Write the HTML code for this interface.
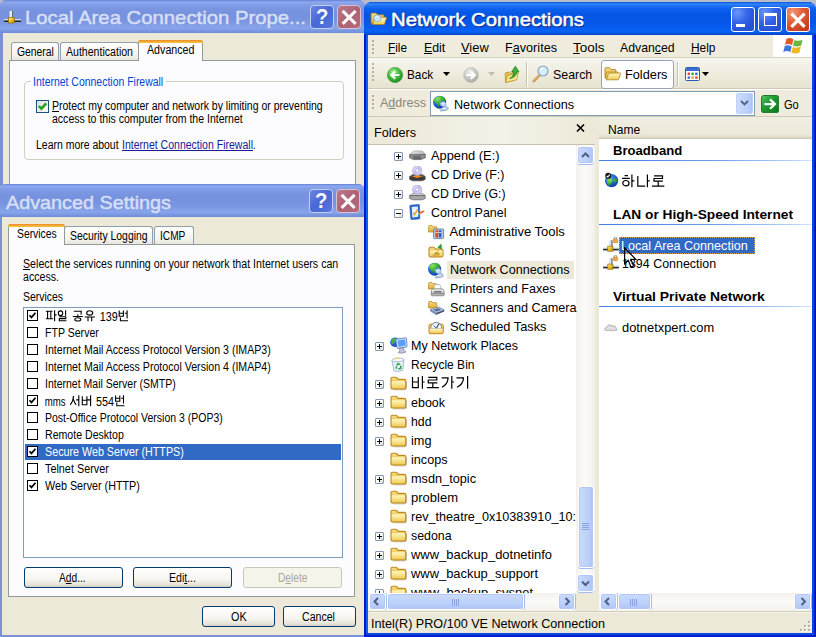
<!DOCTYPE html>
<html><head><meta charset="utf-8"><title>Network Connections</title><style>
html,body{margin:0;padding:0}
body{width:816px;height:637px;overflow:hidden;position:relative;background:#b8bcc6;font-family:"Liberation Sans",sans-serif}
#pg{position:absolute;left:0;top:0;width:816px;height:637px;overflow:hidden}
#pg div,#pg svg,#pg span{position:absolute}
.t{white-space:nowrap;line-height:1;transform-origin:0 0}
.t u{text-decoration:underline}
</style></head><body><div id="pg">
<svg width="0" height="0" style="left:0;top:0"><defs><linearGradient id="fo" x1="0" y1="0" x2="0" y2="1"><stop offset="0" stop-color="#fff8c0"/><stop offset="1" stop-color="#f0cc58"/></linearGradient><linearGradient id="fb" x1="0" y1="0" x2="0" y2="1"><stop offset="0" stop-color="#f8dc80"/><stop offset="1" stop-color="#e0ac38"/></linearGradient><radialGradient id="gl" cx=".38" cy=".32" r=".8"><stop offset="0" stop-color="#58a0f0"/><stop offset=".6" stop-color="#1c58c8"/><stop offset="1" stop-color="#0c3490"/></radialGradient><radialGradient id="gb" cx=".38" cy=".3" r=".8"><stop offset="0" stop-color="#9cec84"/><stop offset=".55" stop-color="#3cb838"/><stop offset="1" stop-color="#188420"/></radialGradient><radialGradient id="gf" cx=".38" cy=".3" r=".8"><stop offset="0" stop-color="#ececea"/><stop offset=".65" stop-color="#c0c0ba"/><stop offset="1" stop-color="#a0a09a"/></radialGradient><linearGradient id="ggo" x1="0" y1="0" x2="1" y2="1"><stop offset="0" stop-color="#5cc464"/><stop offset=".4" stop-color="#1e9c32"/><stop offset="1" stop-color="#0c7420"/></linearGradient><linearGradient id="dt" x1="0" y1="0" x2="1" y2="1"><stop offset="0" stop-color="#f4f4f4"/><stop offset="1" stop-color="#a8a8a8"/></linearGradient><linearGradient id="cdg" x1="0" y1="0" x2="1" y2="1"><stop offset="0" stop-color="#f0ecff"/><stop offset=".5" stop-color="#c4bcf0"/><stop offset="1" stop-color="#e4e0fc"/></linearGradient><linearGradient id="bar" x1="0" y1="0" x2="0" y2="1"><stop offset="0" stop-color="#e4eefa"/><stop offset=".45" stop-color="#a8b8c8"/><stop offset=".55" stop-color="#303030"/><stop offset="1" stop-color="#202020"/></linearGradient><linearGradient id="yb" x1="0" y1="0" x2="1" y2="1"><stop offset="0" stop-color="#fff0a0"/><stop offset=".5" stop-color="#f0c020"/><stop offset="1" stop-color="#b88800"/></linearGradient><radialGradient id="gr" cx=".3" cy=".25" r=".9"><stop offset="0" stop-color="#8ce060"/><stop offset=".5" stop-color="#38b030"/><stop offset="1" stop-color="#148018"/></radialGradient></defs></svg>
<div style="left:0px;top:0px;width:365px;height:186px;background:#7b92d6;border-radius:6px 7px 0 0"></div>
<div style="left:0px;top:0px;width:365px;height:33px;background:linear-gradient(to bottom,#6480d8 0,#8ea9ee 2px,#86a1ea 4px,#7c98e2 7px,#7691de 13px,#7792df 19px,#7f9be5 24px,#88a5eb 28px,#7f9be4 30px,#7390de 32px,#6f8bda 33px);border-radius:6px 7px 0 0"></div>
<div style="left:3px;top:33px;width:362px;height:153px;background:#ECE9D8"></div>
<div style="left:310.4px;top:5.2px;width:24px;height:24.3px;box-sizing:border-box;border:1px solid #c3cff0;border-radius:4px;background:linear-gradient(135deg,#6a86e2 0,#4a69d6 45%,#4c6cd8 70%,#5a7ce4 100%)"></div>
<div style="left:337.4px;top:5.2px;width:24px;height:24.3px;box-sizing:border-box;border:1px solid #d9c3cf;border-radius:4px;background:linear-gradient(135deg,#bd7a8c 0,#ad6275 50%,#b56b7c 100%)"></div>
<svg style="left:337.4px;top:5.2px" width="24" height="24" viewBox="0 0 24 24"><path d="M5.6 5.8 L18.6 18.8 M18.6 5.8 L5.6 18.8" stroke="#fbf8fa" stroke-width="3.1" fill="none"/></svg>
<svg style="left:4px;top:11px" width="17" height="13" viewBox="0 0 17 13"><rect x="0" y="8" width="17" height="3" fill="url(#bar)"/><rect x="5.6" y="0" width="3.2" height="8.4" fill="#e8ecf4"/><rect x="8" y="0" width="1" height="8.4" fill="#60687c"/><rect x="4.6" y="6.4" width="5.6" height="5.6" fill="url(#yb)" stroke="#8c6c08" stroke-width=".7"/></svg>
<div style="left:9px;top:60px;width:347px;height:130px;box-sizing:border-box;border:1px solid #919b9c;background:#fcfcfe"></div>
<div style="left:11px;top:42px;width:48px;height:18px;box-sizing:border-box;border:1px solid #91a1ac;border-bottom:none;border-radius:3px 3px 0 0;background:linear-gradient(to bottom,#fff 0,#f4f3ee 70%,#e8e6dc 100%)"></div>
<div style="left:60px;top:42px;width:78.5px;height:18px;box-sizing:border-box;border:1px solid #91a1ac;border-bottom:none;border-radius:3px 3px 0 0;background:linear-gradient(to bottom,#fff 0,#f4f3ee 70%,#e8e6dc 100%)"></div>
<div style="left:138px;top:40px;width:65px;height:21px;box-sizing:border-box;border:1px solid #919b9c;border-bottom:none;border-radius:3px 3px 0 0;background:#fcfcfe"></div>
<div style="left:138px;top:40px;width:65px;height:3px;border-radius:3px 3px 0 0;background:linear-gradient(to bottom,#e68b2c 0,#ffc73c 100%)"></div>
<div style="left:24px;top:81px;width:320px;height:79px;box-sizing:border-box;border:1px solid #d0d0bf;border-radius:4px"></div>
<div style="left:31px;top:76px;width:135px;height:12px;background:#fcfcfe"></div>
<div style="left:36px;top:100px;width:13px;height:13px;box-sizing:border-box;border:1px solid #1c5180;background:linear-gradient(135deg,#dcdcd7 0,#fff 100%)"></div>
<svg style="left:36px;top:100px" width="13" height="13" viewBox="0 0 13 13"><path d="M2.8 6 L5.4 8.7 L10.2 3.4" stroke="#21a121" stroke-width="2.5" fill="none"/></svg>
<div style="left:0px;top:184px;width:365px;height:453px;background:#7b92d6;border-radius:6px 7px 0 0"></div>
<div style="left:0px;top:184px;width:365px;height:33px;background:linear-gradient(to bottom,#6480d8 0,#8ea9ee 2px,#86a1ea 4px,#7c98e2 7px,#7691de 13px,#7792df 19px,#7f9be5 24px,#88a5eb 28px,#7f9be4 30px,#7390de 32px,#6f8bda 33px);border-radius:6px 7px 0 0"></div>
<div style="left:2px;top:217px;width:363px;height:418px;background:#ECE9D8"></div>
<div style="left:309.4px;top:189.2px;width:24px;height:24.3px;box-sizing:border-box;border:1px solid #c3cff0;border-radius:4px;background:linear-gradient(135deg,#6a86e2 0,#4a69d6 45%,#4c6cd8 70%,#5a7ce4 100%)"></div>
<div style="left:336.3px;top:189.2px;width:24px;height:24.3px;box-sizing:border-box;border:1px solid #d9c3cf;border-radius:4px;background:linear-gradient(135deg,#bd7a8c 0,#ad6275 50%,#b56b7c 100%)"></div>
<svg style="left:336.3px;top:189.2px" width="24" height="24" viewBox="0 0 24 24"><path d="M5.6 5.8 L18.6 18.8 M18.6 5.8 L5.6 18.8" stroke="#fbf8fa" stroke-width="3.1" fill="none"/></svg>
<div style="left:8px;top:244px;width:347px;height:353px;box-sizing:border-box;border:1px solid #919b9c;background:#fcfcfe"></div>
<div style="left:64px;top:226px;width:88.5px;height:18px;box-sizing:border-box;border:1px solid #91a1ac;border-bottom:none;border-radius:3px 3px 0 0;background:linear-gradient(to bottom,#fff 0,#f4f3ee 70%,#e8e6dc 100%)"></div>
<div style="left:153.5px;top:226px;width:40.5px;height:18px;box-sizing:border-box;border:1px solid #91a1ac;border-bottom:none;border-radius:3px 3px 0 0;background:linear-gradient(to bottom,#fff 0,#f4f3ee 70%,#e8e6dc 100%)"></div>
<div style="left:8px;top:224px;width:57px;height:21px;box-sizing:border-box;border:1px solid #919b9c;border-bottom:none;border-radius:3px 3px 0 0;background:#fcfcfe"></div>
<div style="left:8px;top:224px;width:57px;height:3px;border-radius:3px 3px 0 0;background:linear-gradient(to bottom,#e68b2c 0,#ffc73c 100%)"></div>
<div style="left:23px;top:307px;width:320px;height:251px;box-sizing:border-box;border:1px solid #7f9db9;background:#fff"></div>
<div style="left:27px;top:310px;width:11px;height:11px;box-sizing:border-box;border:1px solid #000;background:#fff"></div>
<svg style="left:27px;top:310px" width="11" height="11" viewBox="0 0 11 11"><path d="M2.5 5.2 L4.5 7.4 L8.5 2.8" stroke="#000" stroke-width="1.7" fill="none"/></svg>
<svg style="left:45px;top:304.5px" width="100" height="22" viewBox="0 0 100 22"><g transform="translate(0.9,5.2)" stroke="#000" stroke-width="1.1" fill="none" stroke-linecap="butt"><path d="M0 1H6.6 M1.7 1V8.6 M4.9 1V8.6 M0 8.6H7.2 M8.7 0V11 M8.7 4.7H10.6"/></g><g transform="translate(12.8,5.2)" stroke="#000" stroke-width="1.1" fill="none" stroke-linecap="butt"><ellipse cx="2.7" cy="3" rx="2.2" ry="2.3"/><path d="M7.8 0V5.6 M1.5 6.5H8 V8.4H1.5 V10.5H8.6"/></g><g transform="translate(27.8,5.2)" stroke="#000" stroke-width="1.1" fill="none" stroke-linecap="butt"><path d="M1 1H8.5 L8.2 4.4 M5 4V6.3 M0 6.3H10"/><ellipse cx="5" cy="9.2" rx="3" ry="1.6"/></g><g transform="translate(39.7,5.2)" stroke="#000" stroke-width="1.1" fill="none" stroke-linecap="butt"><ellipse cx="5" cy="2.7" rx="3" ry="2.2"/><path d="M0 6.8H10.3 M3.3 6.8V11 M7 6.8V11"/></g><g transform="translate(73.4,5.2)" stroke="#000" stroke-width="1.1" fill="none" stroke-linecap="butt"><path d="M0.8 0.3V6 H5 V0.3 M0.8 3H5 M8.7 0V8.2 M6.4 3H8.7 M2 7.4V10.5 H9.6"/></g><text x="54.7" y="15.5" font-family="Liberation Sans, sans-serif" font-size="12" textLength="18.1" lengthAdjust="spacingAndGlyphs" fill="#000" stroke="none">139</text></svg>
<div style="left:27px;top:327px;width:11px;height:11px;box-sizing:border-box;border:1px solid #000;background:#fff"></div>
<div style="left:27px;top:344px;width:11px;height:11px;box-sizing:border-box;border:1px solid #000;background:#fff"></div>
<div style="left:27px;top:361px;width:11px;height:11px;box-sizing:border-box;border:1px solid #000;background:#fff"></div>
<div style="left:27px;top:378px;width:11px;height:11px;box-sizing:border-box;border:1px solid #000;background:#fff"></div>
<div style="left:27px;top:395px;width:11px;height:11px;box-sizing:border-box;border:1px solid #000;background:#fff"></div>
<svg style="left:27px;top:395px" width="11" height="11" viewBox="0 0 11 11"><path d="M2.5 5.2 L4.5 7.4 L8.5 2.8" stroke="#000" stroke-width="1.7" fill="none"/></svg>
<svg style="left:45px;top:389.5px" width="100" height="22" viewBox="0 0 100 22"><text x="-0.3" y="15.5" font-family="Liberation Sans, sans-serif" font-size="12" textLength="20.8" lengthAdjust="spacingAndGlyphs" fill="#000" stroke="none">mms</text><g transform="translate(25,5.2)" stroke="#000" stroke-width="1.1" fill="none" stroke-linecap="butt"><path d="M3.5 0.8 C3.4 4.5 2 7.5 0.2 9.6 M3.4 4 C4 6.5 5 8.5 6.3 9.6 M8.8 0V11 M6.2 4.7H8.8"/></g><g transform="translate(36.7,5.2)" stroke="#000" stroke-width="1.1" fill="none" stroke-linecap="butt"><path d="M0.6 1V9.5 H5.2 V1 M0.6 5H5.2 M8.9 0V11 M5.2 4.7H8.9"/></g><g transform="translate(69.8,5.2)" stroke="#000" stroke-width="1.1" fill="none" stroke-linecap="butt"><path d="M0.8 0.3V6 H5 V0.3 M0.8 3H5 M8.7 0V8.2 M6.4 3H8.7 M2 7.4V10.5 H9.6"/></g><text x="51.1" y="15.5" font-family="Liberation Sans, sans-serif" font-size="12" textLength="18" lengthAdjust="spacingAndGlyphs" fill="#000" stroke="none">554</text></svg>
<div style="left:27px;top:412px;width:11px;height:11px;box-sizing:border-box;border:1px solid #000;background:#fff"></div>
<div style="left:27px;top:429px;width:11px;height:11px;box-sizing:border-box;border:1px solid #000;background:#fff"></div>
<div style="left:25px;top:444px;width:316px;height:16px;background:#316ac5"></div>
<div style="left:27px;top:446px;width:11px;height:11px;box-sizing:border-box;border:1px solid #000;background:#fff"></div>
<svg style="left:27px;top:446px" width="11" height="11" viewBox="0 0 11 11"><path d="M2.5 5.2 L4.5 7.4 L8.5 2.8" stroke="#000" stroke-width="1.7" fill="none"/></svg>
<div style="left:27px;top:463px;width:11px;height:11px;box-sizing:border-box;border:1px solid #000;background:#fff"></div>
<div style="left:27px;top:480px;width:11px;height:11px;box-sizing:border-box;border:1px solid #000;background:#fff"></div>
<svg style="left:27px;top:480px" width="11" height="11" viewBox="0 0 11 11"><path d="M2.5 5.2 L4.5 7.4 L8.5 2.8" stroke="#000" stroke-width="1.7" fill="none"/></svg>
<div style="left:24px;top:567px;width:99px;height:21px;border:1px solid #003c74;border-radius:3px;box-sizing:border-box;background:linear-gradient(to bottom,#fff 0,#f6f5f0 60%,#e6e3d8 88%,#d6d0c5 100%)"></div>
<div style="left:133px;top:567px;width:99px;height:21px;border:1px solid #003c74;border-radius:3px;box-sizing:border-box;background:linear-gradient(to bottom,#fff 0,#f6f5f0 60%,#e6e3d8 88%,#d6d0c5 100%)"></div>
<div style="left:243px;top:567px;width:99px;height:21px;border:1px solid #c9c7ba;border-radius:3px;background:#f5f4ea;box-sizing:border-box"></div>
<div style="left:202px;top:606px;width:73px;height:21px;border:1px solid #003c74;border-radius:3px;box-sizing:border-box;background:linear-gradient(to bottom,#fff 0,#f6f5f0 60%,#e6e3d8 88%,#d6d0c5 100%)"></div>
<div style="left:283px;top:606px;width:73px;height:21px;border:1px solid #003c74;border-radius:3px;box-sizing:border-box;background:linear-gradient(to bottom,#fff 0,#f6f5f0 60%,#e6e3d8 88%,#d6d0c5 100%)"></div>
<div style="left:364px;top:1.5px;width:452px;height:636px;background:#0a3cdc;border-radius:8px 8px 0 0"></div>
<div style="left:364px;top:1.5px;width:452px;height:33.5px;background:linear-gradient(to bottom,#0a50d8 0,#3088fa 2px,#2070f6 4px,#0c5fee 7px,#0656e4 12px,#0556e6 20px,#065cee 26px,#0764f6 29px,#0558e2 31px,#0444c4 33px);border-radius:8px 8px 0 0"></div>
<div style="left:364px;top:35px;width:2px;height:600px;background:#0418d2"></div>
<div style="left:366px;top:35px;width:1px;height:598px;background:#1468ee"></div>
<div style="left:367px;top:35px;width:1px;height:598px;background:#0c5ce4"></div>
<div style="left:812px;top:35px;width:2px;height:598px;background:#0a48e6"></div>
<div style="left:814px;top:35px;width:1px;height:600px;background:#0420cc"></div>
<div style="left:815px;top:35px;width:1px;height:602px;background:#001494"></div>
<div style="left:366px;top:633px;width:448px;height:2px;background:#0a48e6"></div>
<div style="left:364px;top:635px;width:452px;height:2px;background:#0420c4"></div>
<div style="left:368px;top:35px;width:444px;height:598px;background:#ECE9D8"></div>
<div style="left:731.3px;top:7.2px;width:24.2px;height:24.4px;box-sizing:border-box;border:1px solid #fff;border-radius:3px;background:radial-gradient(circle at 25% 20%,#6a98fa 0,#3565ea 40%,#2450d2 80%,#2a58dc 100%)"></div>
<div style="left:758.3px;top:7.2px;width:24.2px;height:24.4px;box-sizing:border-box;border:1px solid #fff;border-radius:3px;background:radial-gradient(circle at 25% 20%,#6a98fa 0,#3565ea 40%,#2450d2 80%,#2a58dc 100%)"></div>
<div style="left:785.5px;top:7.2px;width:24.2px;height:24.4px;box-sizing:border-box;border:1px solid #fff;border-radius:3px;background:radial-gradient(circle at 25% 20%,#f29a78 0,#e0603c 40%,#c43a1a 85%,#cc4422 100%)"></div>
<div style="left:736px;top:24px;width:9px;height:3px;background:#fff"></div>
<div style="left:764px;top:13px;width:13px;height:13px;box-sizing:border-box;border:1px solid #fff;border-top:3px solid #fff"></div>
<svg style="left:785.5px;top:7.5px" width="24" height="24" viewBox="0 0 24 24"><path d="M5.4 5.6 L18.6 18.8 M18.6 5.6 L5.4 18.8" stroke="#fff" stroke-width="3.2" fill="none"/></svg>
<svg style="left:370px;top:11px" width="17" height="15" viewBox="0 0 17 15"><path d="M1 3 q0-1 1-1 h3.6 q.7 0 1.1.7 l.7 1.1 H13 q1 0 1 1 V12.6 H1z" fill="url(#fb)" stroke="#a87410" stroke-width=".8"/><path d="M2.6 13.6 L4.8 6.8 q.2-.6.9-.6 H16 q.8 0 .5.8 L14.6 13 q-.2.6-.9.6z" fill="url(#fo)" stroke="#b08018" stroke-width=".8"/><circle cx="7.4" cy="7.4" r="3.5" fill="#c8e6f6" stroke="#88b4d4" stroke-width=".9"/><path d="M5.6 6.6 A2.2 2.2 0 0 1 7.6 5.2" stroke="#fff" stroke-width=".9" fill="none"/></svg>
<div style="left:368px;top:35px;width:444px;height:23px;background:#efecdd"></div>
<div style="left:368px;top:57px;width:444px;height:1px;background:#d8d2bd"></div>
<div style="left:773px;top:35px;width:39px;height:22px;background:#fff"></div>
<svg style="left:783px;top:37px" width="21" height="18" viewBox="0 0 21 18"><path d="M3.4 1.8 C6.2 0.4 8.4 0.9 10.4 2.4 L9 8.2 C7 6.8 5 6.5 2 7.8z" fill="#e8582c"/><path d="M11.4 3 C14 4.3 16.6 4.1 19.6 2.7 L18.2 8.5 C15.2 9.8 12.8 9.7 10 8.7z" fill="#6cb83c"/><path d="M1.7 9 C4.7 7.6 6.7 8 8.7 9.4 L7.3 15.2 C5.3 13.8 3.3 13.6 .3 14.9z" fill="#3c78d8"/><path d="M9.8 9.9 C12.6 11 15 10.9 17.9 9.6 L16.5 15.4 C13.6 16.7 11.2 16.7 8.4 15.7z" fill="#f0b820"/></svg>
<div style="left:372px;top:40px;width:2px;height:2px;background:#b5b19f"></div>
<div style="left:372px;top:44px;width:2px;height:2px;background:#b5b19f"></div>
<div style="left:372px;top:48px;width:2px;height:2px;background:#b5b19f"></div>
<div style="left:372px;top:52px;width:2px;height:2px;background:#b5b19f"></div>
<div style="left:368px;top:58px;width:444px;height:31px;background:linear-gradient(to bottom,#f7f6ef 0,#efecdd 50%,#e6e2cf 100%)"></div>
<div style="left:368px;top:88px;width:444px;height:1px;background:#d0cab4"></div>
<div style="left:368px;top:89px;width:444px;height:1px;background:#fff"></div>
<div style="left:372px;top:63px;width:2px;height:2px;background:#b5b19f"></div>
<div style="left:372px;top:67px;width:2px;height:2px;background:#b5b19f"></div>
<div style="left:372px;top:71px;width:2px;height:2px;background:#b5b19f"></div>
<div style="left:372px;top:75px;width:2px;height:2px;background:#b5b19f"></div>
<div style="left:372px;top:79px;width:2px;height:2px;background:#b5b19f"></div>
<svg style="left:386.5px;top:66.5px" width="16" height="16" viewBox="0 0 16 16"><circle cx="8" cy="8" r="7.6" fill="url(#gb)" stroke="#2a8a2c" stroke-width=".6"/><path d="M12.4 8 H5 M8.2 4.4 L4.4 8 L8.2 11.6" stroke="#fff" stroke-width="2.2" fill="none"/></svg>
<svg style="left:443px;top:72px" width="7" height="4" viewBox="0 0 7 4"><path d="M0 0h7L3.5 4z" fill="#000"/></svg>
<svg style="left:463px;top:66.5px" width="16" height="16" viewBox="0 0 16 16"><circle cx="8" cy="8" r="7.4" fill="url(#gf)" stroke="#b0b0a8" stroke-width=".5"/><path d="M3.6 8 H11 M7.8 4.4 L11.6 8 L7.8 11.6" stroke="#fff" stroke-width="2.2" fill="none"/></svg>
<svg style="left:488px;top:72px" width="7" height="4" viewBox="0 0 7 4"><path d="M0 0h7L3.5 4z" fill="#c0bdb0"/></svg>
<svg style="left:504px;top:65px" width="16" height="18" viewBox="0 0 16 18"><path d="M1.2 8 l4-1 l1.4 1.4 l4.6-1.2 V15 L1.6 17.4z" fill="#e8c050" stroke="#b08818" stroke-width=".7"/><path d="M1.6 17.4 L3.6 10.6 L14.4 8 L12.6 14.8z" fill="#fbe890" stroke="#b89020" stroke-width=".7"/><path d="M5.6 13.4 C8 12.6 9.6 10.4 9.8 7 H7.6 L11.4 1.2 L15 7 H12.8 C12.4 10.6 9.8 13 5.6 13.4z" fill="#3cb038" stroke="#187818" stroke-width=".7"/></svg>
<div style="left:526px;top:62px;width:1px;height:24px;background:#c5c2b2"></div>
<div style="left:527px;top:62px;width:1px;height:24px;background:#fff"></div>
<svg style="left:532px;top:65px" width="17" height="18" viewBox="0 0 17 18"><path d="M1.8 16.2 L7.8 9.8" stroke="#c8944c" stroke-width="2.6" stroke-linecap="round"/><path d="M1.6 15.8 L7.4 9.6" stroke="#e8c088" stroke-width="1" stroke-linecap="round"/><circle cx="11" cy="6" r="4.9" fill="#d8eefc" stroke="#90acd0" stroke-width="1.4"/><path d="M8.3 4.8 A3.2 3.2 0 0 1 11 2.9" stroke="#fff" stroke-width="1.3" fill="none"/></svg>
<div style="left:601px;top:59.5px;width:73px;height:29px;box-sizing:border-box;border:1px solid #94a4bc;border-radius:3px;background:#fff"></div>
<svg style="left:604px;top:66px" width="17" height="15" viewBox="0 0 17 15"><path d="M1 2.6 q0-.9.9-.9 h3.4 q.6 0 1 .6 l.8 1.2 H11 q.9 0 .9.9 V12 H1z" fill="url(#fb)" stroke="#a87410" stroke-width=".8"/><path d="M3 6 H13.4 q.8 0 .6.8 L12.6 12 H1.4z" fill="#f4d468" stroke="#b08018" stroke-width=".7"/><path d="M2.2 13.8 L4.6 7.6 q.2-.6.9-.6 H16 q.8 0 .5.8 L14.6 13.2 q-.2.6-.9.6z" fill="url(#fo)" stroke="#b08018" stroke-width=".8"/></svg>
<div style="left:676.5px;top:62px;width:1px;height:24px;background:#c5c2b2"></div>
<div style="left:677.5px;top:62px;width:1px;height:24px;background:#fff"></div>
<svg style="left:684.5px;top:67px" width="15" height="14" viewBox="0 0 15 14"><rect x=".5" y=".5" width="14" height="13" rx="1" fill="#fff" stroke="#2c58b8" stroke-width="1"/><path d="M1 1.4 q0-.4.4-.4 h12.2 q.4 0 .4.4 V4 H1z" fill="#3c6cd8"/><rect x="2.6" y="5.6" width="2.4" height="2.4" fill="#d84830"/><rect x="6.4" y="5.6" width="2.4" height="2.4" fill="#38a838"/><rect x="10.2" y="5.6" width="2.4" height="2.4" fill="#3868d0"/><rect x="2.6" y="9.4" width="2.4" height="2.4" fill="#3868d0"/><rect x="6.4" y="9.4" width="2.4" height="2.4" fill="#e0a020"/><rect x="10.2" y="9.4" width="2.4" height="2.4" fill="#d84830"/></svg>
<svg style="left:702px;top:72px" width="7" height="4" viewBox="0 0 7 4"><path d="M0 0h7L3.5 4z" fill="#000"/></svg>
<div style="left:368px;top:90px;width:444px;height:26px;background:#efecdd"></div>
<div style="left:368px;top:116px;width:444px;height:1px;background:#d0cab4"></div>
<div style="left:372px;top:95px;width:2px;height:2px;background:#b5b19f"></div>
<div style="left:372px;top:99px;width:2px;height:2px;background:#b5b19f"></div>
<div style="left:372px;top:103px;width:2px;height:2px;background:#b5b19f"></div>
<div style="left:372px;top:107px;width:2px;height:2px;background:#b5b19f"></div>
<div style="left:430px;top:91px;width:325px;height:24.5px;box-sizing:border-box;border:1px solid #7f9db9;background:#fff"></div>
<svg style="left:433px;top:95px" width="17" height="17" viewBox="0 0 17 17"><circle cx="6.6" cy="7.2" r="6.5" fill="url(#gl)"/><path d="M1 4.6 C2.4 1.8 5.6 .6 8 1.1 C10.2 1.7 11.8 3.3 12.6 5.2 C11.6 6.4 10.2 6.2 9.2 5.4 C8.2 6 7.2 6.8 7 8.2 C7.4 9.6 6.8 11 5.8 11.8 C4.8 10.4 4.6 9.2 3.6 8.6 C2.2 8.2 .8 6.6 1 4.6z" fill="url(#gr)"/><path d="M10.4 11.2 C13.4 11.4 15.2 12.4 14 13.8 C12.4 15 8.6 14.2 6.8 15.6" stroke="#5c6c88" stroke-width="1.6" fill="none" opacity=".6" transform="translate(.5,.5)"/><path d="M10.4 11.2 C13.4 11.4 15.2 12.4 14 13.8 C12.4 15 8.6 14.2 6.8 15.6" stroke="#a8c8f0" stroke-width="1.5" fill="none"/><path d="M6.8 7.8 L10.8 6.2 L13 8.2 L13.2 10.4 L9.8 11.8 L7.6 10.2z" fill="#bcd6f6" stroke="#7ca0d4" stroke-width=".6"/><path d="M8.6 8.4 L10.8 7.6 L11.8 8.8 L9.6 9.8z" fill="#e4f0fe"/></svg>
<div style="left:735.8px;top:92.6px;width:17.4px;height:21.2px;box-sizing:border-box;border:1px solid #c0d2fa;border-radius:2px;background:linear-gradient(to right,#cbdcfd 0,#bed2fb 60%,#aec4f6 100%)"></div>
<svg style="left:740px;top:100.3px" width="9" height="6" viewBox="0 0 9 6"><path d="M1 1 L4.5 4.5 L8 1" stroke="#4d6185" stroke-width="1.8" fill="none"/></svg>
<svg style="left:760.7px;top:94.7px" width="18.2" height="18.2" viewBox="0 0 19 19"><rect x=".5" y=".5" width="18" height="18" rx="2.4" fill="url(#ggo)" stroke="#187428" stroke-width="1"/><path d="M3.6 9.5 H14 M9.4 4.6 L14.6 9.5 L9.4 14.4" stroke="#fff" stroke-width="2.4" fill="none"/></svg>
<div style="left:368px;top:117px;width:227px;height:27px;background:linear-gradient(to right,#ece9d8 0,#f4f2e8 60%,#ece9d8 100%)"></div>
<div style="left:368px;top:144px;width:227px;height:1px;background:#c5c2b2"></div>
<svg style="left:575.5px;top:123.5px" width="9" height="8" viewBox="0 0 9 8"><path d="M1 0.5 L8 7.5 M8 0.5 L1 7.5" stroke="#000" stroke-width="1.6" fill="none"/></svg>
<div style="left:368px;top:145px;width:208px;height:448px;background:#fff"></div>
<div style="left:368px;top:145px;width:208px;height:448px;overflow:hidden">
<div style="left:26px;top:7px;width:9px;height:9px;box-sizing:border-box;border:1px solid #8498b0;border-radius:1px;background:linear-gradient(135deg,#fff 0,#fff 50%,#d8d4c4 100%)"></div>
<div style="left:28px;top:11px;width:5px;height:1px;background:#000"></div>
<div style="left:30px;top:9px;width:1px;height:5px;background:#000"></div>
<svg style="left:40.6px;top:3px" width="17" height="16" viewBox="0 0 17 16"><path d="M.4 6.8 L4.6 3 H13.4 L16.4 6.4z" fill="url(#dt)" stroke="#909090" stroke-width=".6"/><path d="M.4 6.8 L16.4 6.4 V9.8 L12 11.6 H4.4 L.4 9.8z" fill="#8a8a8a" stroke="#585858" stroke-width=".6"/><path d="M4.4 8.2 H12 V11.4 H4.4z" fill="#686868"/><rect x="12.6" y="8" width="2" height="1" fill="#9c9c9c"/></svg>
<div style="left:26px;top:26px;width:9px;height:9px;box-sizing:border-box;border:1px solid #8498b0;border-radius:1px;background:linear-gradient(135deg,#fff 0,#fff 50%,#d8d4c4 100%)"></div>
<div style="left:28px;top:30px;width:5px;height:1px;background:#000"></div>
<div style="left:30px;top:28px;width:1px;height:5px;background:#000"></div>
<svg style="left:40.6px;top:21px" width="17" height="16" viewBox="0 0 17 16"><path d="M.6 10.6 L3.6 8.4 H13.4 L16.2 10.4z" fill="#585858" stroke="#505050" stroke-width=".5"/><path d="M.6 10.6 H16.2 V13.4 L13 14.8 H3.6 L.6 13.4z" fill="#3c3c3c" stroke="#484848" stroke-width=".6"/><path d="M3 10.4 L8 9 L13.6 10.2 L8.4 12z" fill="#f48420"/><ellipse cx="8.2" cy="4.6" rx="4.6" ry="4.8" fill="url(#cdg)" stroke="#9c98c0" stroke-width=".6"/><circle cx="8.2" cy="4.6" r="1.5" fill="#fff" stroke="#a8a4cc" stroke-width=".5"/></svg>
<div style="left:26px;top:45px;width:9px;height:9px;box-sizing:border-box;border:1px solid #8498b0;border-radius:1px;background:linear-gradient(135deg,#fff 0,#fff 50%,#d8d4c4 100%)"></div>
<div style="left:28px;top:49px;width:5px;height:1px;background:#000"></div>
<div style="left:30px;top:47px;width:1px;height:5px;background:#000"></div>
<svg style="left:40.6px;top:40px" width="17" height="16" viewBox="0 0 17 16"><path d="M.6 10.6 L3.6 8.4 H13.4 L16.2 10.4z" fill="#d4d4d4" stroke="#505050" stroke-width=".5"/><path d="M.6 10.6 H16.2 V13.4 L13 14.8 H3.6 L.6 13.4z" fill="#a8a8a8" stroke="#484848" stroke-width=".6"/><ellipse cx="8.2" cy="4.6" rx="4.6" ry="4.8" fill="url(#cdg)" stroke="#9c98c0" stroke-width=".6"/><circle cx="8.2" cy="4.6" r="1.5" fill="#fff" stroke="#a8a4cc" stroke-width=".5"/></svg>
<div style="left:26px;top:64px;width:9px;height:9px;box-sizing:border-box;border:1px solid #8498b0;border-radius:1px;background:linear-gradient(135deg,#fff 0,#fff 50%,#d8d4c4 100%)"></div>
<div style="left:28px;top:68px;width:5px;height:1px;background:#000"></div>
<svg style="left:40.6px;top:59px" width="17" height="17" viewBox="0 0 17 17"><path d="M1.6 1.2 L9.6 .4 q.8 0 .8.8 L10.8 14 q0 .8-.8.9 L2.8 15.6 q-.9.1-1-.8 L.8 2.2 q0-.9.8-1z" fill="#2c6cd8" stroke="#1848a0" stroke-width=".6"/><path d="M2.8 3 L8.8 2.4 L9.2 12.8 L3.4 13.6z" fill="#e4f0fc"/><path d="M4 8.6 L5.6 10.6 L8.4 5.6" stroke="#e8a818" stroke-width="1.5" fill="none"/><path d="M9.6 8.6 L14.4 6.4 L15.8 7.4 L10.6 10.2z" fill="#e85c28"/><path d="M9.6 8.6 L10.6 10.2 L8.6 10.4z" fill="#f8d8a0"/></svg>
<svg style="left:59.6px;top:79px" width="17" height="16" viewBox="0 0 17 16"><path d="M.6 2.4 q0-.9.9-.9 h2.4 l1 1.2 H8 q.9 0 .9.9 V8 H.6z" fill="url(#fb)" stroke="#b08018" stroke-width=".7"/><rect x="5.6" y="5" width="10" height="9.6" rx="1" fill="#b8c8e0" stroke="#5870a0" stroke-width=".8"/><rect x="7.4" y="6.4" width="2.8" height="7" fill="#e04820"/><rect x="10.8" y="6.4" width="2.6" height="7" fill="#2c5cc8"/><rect x="7.4" y="8" width="2.8" height="1" fill="#f8d080"/><rect x="10.8" y="8" width="2.6" height="1" fill="#c0d4f8"/></svg>
<svg style="left:59.6px;top:98px" width="17" height="16" viewBox="0 0 17 16"><path d="M1 5.4 q0-1.2 1.2-1.2 h3.4 q.8 0 1.2.7 l.7 1.1 h6.3 q1.2 0 1.2 1.2 v5.6 q0 1.2-1.2 1.2 H2.2 q-1.2 0-1.2-1.2z" fill="url(#fb)" stroke="#b4801c" stroke-width="1"/><path d="M1.7 8.4 q0-.9.9-.9 h11 q.9 0 .9.9 v4 q0 .9-.9.9 h-11 q-.9 0-.9-.9z" fill="url(#fo)"/><path d="M9.4 4.6 L13.4 .6 L14 6.4z" fill="#2c9c34"/><path d="M4.6 12 H11 V10.4 H6.6 L10.6 8.4" stroke="#b88c18" stroke-width=".9" fill="none"/></svg>
<div style="left:79px;top:115.5px;width:127px;height:18.5px;background:#ece9d8"></div>
<svg style="left:59.6px;top:117px" width="17" height="17" viewBox="0 0 17 17"><circle cx="6.6" cy="7.2" r="6.5" fill="url(#gl)"/><path d="M1 4.6 C2.4 1.8 5.6 .6 8 1.1 C10.2 1.7 11.8 3.3 12.6 5.2 C11.6 6.4 10.2 6.2 9.2 5.4 C8.2 6 7.2 6.8 7 8.2 C7.4 9.6 6.8 11 5.8 11.8 C4.8 10.4 4.6 9.2 3.6 8.6 C2.2 8.2 .8 6.6 1 4.6z" fill="url(#gr)"/><path d="M10.4 11.2 C13.4 11.4 15.2 12.4 14 13.8 C12.4 15 8.6 14.2 6.8 15.6" stroke="#5c6c88" stroke-width="1.6" fill="none" opacity=".6" transform="translate(.5,.5)"/><path d="M10.4 11.2 C13.4 11.4 15.2 12.4 14 13.8 C12.4 15 8.6 14.2 6.8 15.6" stroke="#a8c8f0" stroke-width="1.5" fill="none"/><path d="M6.8 7.8 L10.8 6.2 L13 8.2 L13.2 10.4 L9.8 11.8 L7.6 10.2z" fill="#bcd6f6" stroke="#7ca0d4" stroke-width=".6"/><path d="M8.6 8.4 L10.8 7.6 L11.8 8.8 L9.6 9.8z" fill="#e4f0fe"/></svg>
<svg style="left:59.6px;top:136px" width="17" height="16" viewBox="0 0 17 16"><path d="M.6 2.4 q0-.9.9-.9 h2.4 l1 1.2 H8 q.9 0 .9.9 V8 H.6z" fill="url(#fb)" stroke="#b08018" stroke-width=".7"/><path d="M6.4 3.6 H12 L13.4 8.4 H6z" fill="#fff" stroke="#9098a8" stroke-width=".6"/><path d="M3.6 9.4 Q4 7.8 5.6 7.8 H13.6 Q15.4 7.8 15.8 9.4 L16.2 12.4 H3.2z" fill="#e4e4e4" stroke="#787878" stroke-width=".7"/><path d="M3.2 12.2 H16.2 V13.6 Q16.2 14.8 15 14.8 H4.4 Q3.2 14.8 3.2 13.6z" fill="#b4b4b4" stroke="#686868" stroke-width=".6"/><rect x="6" y="10.2" width="7.4" height="1.2" fill="#585858"/></svg>
<svg style="left:59.6px;top:155px" width="17" height="16" viewBox="0 0 17 16"><path d="M.6 2.4 q0-.9.9-.9 h2.4 l1 1.2 H8 q.9 0 .9.9 V8 H.6z" fill="url(#fb)" stroke="#b08018" stroke-width=".7"/><path d="M2.6 9.6 L10.6 7 L16.2 10 L8.4 13z" fill="#d4e0f4" stroke="#5870a0" stroke-width=".7"/><path d="M8.4 13 L16.2 10 V11.6 L8.4 14.8z" fill="#404c68"/><path d="M2.6 9.6 L8.4 13 V14.8 L2.6 11.2z" fill="#8898b8" stroke="#5870a0" stroke-width=".5"/><path d="M5 9.8 L10.4 8 L13.6 9.8 L8.4 11.8z" fill="#58709c"/></svg>
<svg style="left:59.6px;top:174px" width="17" height="16" viewBox="0 0 17 16"><path d="M1 6.4 q0-1.3 1.3-1.3 H14 q1.3 0 1.3 1.3 v7 q0 1.3-1.3 1.3 H2.3 q-1.3 0-1.3-1.3z" fill="url(#fb)" stroke="#c08a1c" stroke-width="1"/><path d="M2.6 9.8 A5.6 6.4 0 0 1 13.8 9.8z" fill="#f0f6fc" stroke="#7888a4" stroke-width="1"/><path d="M8.2 9.4 L11 4.4" stroke="#304868" stroke-width="1.1"/><path d="M8.2 9.4 L5.6 6.6" stroke="#304868" stroke-width=".8"/><path d="M1.8 10.4 q0-.9.9-.9 h11 q.9 0 .9.9 v2.8 q0 .9-.9.9 h-11 q-.9 0-.9-.9z" fill="url(#fo)"/></svg>
<div style="left:7px;top:197px;width:9px;height:9px;box-sizing:border-box;border:1px solid #8498b0;border-radius:1px;background:linear-gradient(135deg,#fff 0,#fff 50%,#d8d4c4 100%)"></div>
<div style="left:9px;top:201px;width:5px;height:1px;background:#000"></div>
<div style="left:11px;top:199px;width:1px;height:5px;background:#000"></div>
<svg style="left:21.5px;top:192px" width="18" height="17" viewBox="0 0 18 17"><circle cx="5" cy="5.2" r="4.8" fill="url(#gl)"/><path d="M1.4 3.6 C2.6 1.4 5 .8 6.6 1.4 C7 2.8 6 3.8 4.8 4 C4.4 5.4 3.4 6 3 7.4 C2 6.8 1 5.2 1.4 3.6z" fill="#44b43c"/><path d="M6.4 2 L15.6 .8 q.8-.1.9.7 L17 9.2 q.1.8-.7.9 L8 11.4 q-.8.1-.9-.7 L5.8 3 q-.1-.9.6-1z" fill="#c8dcf8" stroke="#5878c0" stroke-width=".8"/><path d="M7.6 3.4 L15 2.4 L15.6 8.6 L8.6 9.8z" fill="#58a0f8"/><path d="M9.6 11.4 L13.4 11 L14 13.2 L16 15 Q12 17 8.2 15.8 L9.6 13.6z" fill="#c4c4dc" stroke="#7070a0" stroke-width=".6"/></svg>
<svg style="left:21.5px;top:212px" width="17" height="16" viewBox="0 0 17 16"><path d="M2 3.4 Q8 5.4 14 2.6 L12.8 13.2 Q8.4 15.6 4 13.8z" fill="#e4f0fa" stroke="#90a8c4" stroke-width=".8" opacity=".95"/><ellipse cx="8" cy="3" rx="6" ry="1.8" fill="#f8fcff" stroke="#90a8c4" stroke-width=".7" transform="rotate(-4 8 3)"/><path d="M4.4 1.6 L6.4 .8 L9.4 1.4" stroke="#f0d070" stroke-width="1.2" fill="none"/><path d="M6.6 8.4 L8.2 6.6 L10.2 7.6 M10.8 8.8 L10.6 11.4 L8.4 12 M6.8 11.6 L6 9.6" stroke="#28a03c" stroke-width="1.5" fill="none"/></svg>
<div style="left:7px;top:235px;width:9px;height:9px;box-sizing:border-box;border:1px solid #8498b0;border-radius:1px;background:linear-gradient(135deg,#fff 0,#fff 50%,#d8d4c4 100%)"></div>
<div style="left:9px;top:239px;width:5px;height:1px;background:#000"></div>
<div style="left:11px;top:237px;width:1px;height:5px;background:#000"></div>
<svg style="left:21.5px;top:231px" width="18" height="16" viewBox="0 0 18 16"><path d="M16.4 5.4 V12 q0 1.8-1.8 1.8 H3.2" stroke="#8c8878" stroke-width="1" fill="none" opacity=".55"/><path d="M1 2.9 q0-1.6 1.6-1.6 h3.2 q.9 0 1.4.8 l.8 1.3 h6.2 q1.6 0 1.6 1.6 v6.4 q0 1.6-1.6 1.6 H2.6 q-1.6 0-1.6-1.6z" fill="url(#fb)" stroke="#c08a1c" stroke-width="1.1"/><path d="M1.8 6.3 q0-1 1-1 h11.2 q1 0 1 1 v5 q0 1-1 1 H2.8 q-1 0-1-1z" fill="url(#fo)"/></svg>
<svg style="left:43px;top:228px" width="62" height="22" viewBox="0 0 62 22"><g transform="translate(0.6,3)" stroke="#000" stroke-width="1.2" fill="none" stroke-linecap="butt"><path d="M0.9 1.1V11.6 H6.7 V1.1 M0.9 6H6.7 M10.8 0V12.7 M10.8 6H13"/></g><g transform="translate(15.8,3)" stroke="#000" stroke-width="1.2" fill="none" stroke-linecap="butt"><path d="M1.5 1.4H10 V4 H1.5 V6.8 H10.6 M6 6.8V11.6 M0 11.6H12.1"/></g><g transform="translate(30.1,3)" stroke="#000" stroke-width="1.2" fill="none" stroke-linecap="butt"><path d="M0.5 1.9H7 C6.8 6 4.5 9.5 0.8 11.2 M10.7 0V12.7 M10.7 6H12.9"/></g><g transform="translate(45,3)" stroke="#000" stroke-width="1.2" fill="none" stroke-linecap="butt"><path d="M0.5 1.9H7.5 C7.3 6 5 9.5 1 11.2 M11.6 0V12.7"/></g></svg>
<div style="left:7px;top:254px;width:9px;height:9px;box-sizing:border-box;border:1px solid #8498b0;border-radius:1px;background:linear-gradient(135deg,#fff 0,#fff 50%,#d8d4c4 100%)"></div>
<div style="left:9px;top:258px;width:5px;height:1px;background:#000"></div>
<div style="left:11px;top:256px;width:1px;height:5px;background:#000"></div>
<svg style="left:21.5px;top:250px" width="18" height="16" viewBox="0 0 18 16"><path d="M16.4 5.4 V12 q0 1.8-1.8 1.8 H3.2" stroke="#8c8878" stroke-width="1" fill="none" opacity=".55"/><path d="M1 2.9 q0-1.6 1.6-1.6 h3.2 q.9 0 1.4.8 l.8 1.3 h6.2 q1.6 0 1.6 1.6 v6.4 q0 1.6-1.6 1.6 H2.6 q-1.6 0-1.6-1.6z" fill="url(#fb)" stroke="#c08a1c" stroke-width="1.1"/><path d="M1.8 6.3 q0-1 1-1 h11.2 q1 0 1 1 v5 q0 1-1 1 H2.8 q-1 0-1-1z" fill="url(#fo)"/></svg>
<div style="left:7px;top:273px;width:9px;height:9px;box-sizing:border-box;border:1px solid #8498b0;border-radius:1px;background:linear-gradient(135deg,#fff 0,#fff 50%,#d8d4c4 100%)"></div>
<div style="left:9px;top:277px;width:5px;height:1px;background:#000"></div>
<div style="left:11px;top:275px;width:1px;height:5px;background:#000"></div>
<svg style="left:21.5px;top:269px" width="18" height="16" viewBox="0 0 18 16"><path d="M16.4 5.4 V12 q0 1.8-1.8 1.8 H3.2" stroke="#8c8878" stroke-width="1" fill="none" opacity=".55"/><path d="M1 2.9 q0-1.6 1.6-1.6 h3.2 q.9 0 1.4.8 l.8 1.3 h6.2 q1.6 0 1.6 1.6 v6.4 q0 1.6-1.6 1.6 H2.6 q-1.6 0-1.6-1.6z" fill="url(#fb)" stroke="#c08a1c" stroke-width="1.1"/><path d="M1.8 6.3 q0-1 1-1 h11.2 q1 0 1 1 v5 q0 1-1 1 H2.8 q-1 0-1-1z" fill="url(#fo)"/></svg>
<div style="left:7px;top:292px;width:9px;height:9px;box-sizing:border-box;border:1px solid #8498b0;border-radius:1px;background:linear-gradient(135deg,#fff 0,#fff 50%,#d8d4c4 100%)"></div>
<div style="left:9px;top:296px;width:5px;height:1px;background:#000"></div>
<div style="left:11px;top:294px;width:1px;height:5px;background:#000"></div>
<svg style="left:21.5px;top:288px" width="18" height="16" viewBox="0 0 18 16"><path d="M16.4 5.4 V12 q0 1.8-1.8 1.8 H3.2" stroke="#8c8878" stroke-width="1" fill="none" opacity=".55"/><path d="M1 2.9 q0-1.6 1.6-1.6 h3.2 q.9 0 1.4.8 l.8 1.3 h6.2 q1.6 0 1.6 1.6 v6.4 q0 1.6-1.6 1.6 H2.6 q-1.6 0-1.6-1.6z" fill="url(#fb)" stroke="#c08a1c" stroke-width="1.1"/><path d="M1.8 6.3 q0-1 1-1 h11.2 q1 0 1 1 v5 q0 1-1 1 H2.8 q-1 0-1-1z" fill="url(#fo)"/></svg>
<svg style="left:21.5px;top:307px" width="18" height="16" viewBox="0 0 18 16"><path d="M16.4 5.4 V12 q0 1.8-1.8 1.8 H3.2" stroke="#8c8878" stroke-width="1" fill="none" opacity=".55"/><path d="M1 2.9 q0-1.6 1.6-1.6 h3.2 q.9 0 1.4.8 l.8 1.3 h6.2 q1.6 0 1.6 1.6 v6.4 q0 1.6-1.6 1.6 H2.6 q-1.6 0-1.6-1.6z" fill="url(#fb)" stroke="#c08a1c" stroke-width="1.1"/><path d="M1.8 6.3 q0-1 1-1 h11.2 q1 0 1 1 v5 q0 1-1 1 H2.8 q-1 0-1-1z" fill="url(#fo)"/></svg>
<div style="left:7px;top:330px;width:9px;height:9px;box-sizing:border-box;border:1px solid #8498b0;border-radius:1px;background:linear-gradient(135deg,#fff 0,#fff 50%,#d8d4c4 100%)"></div>
<div style="left:9px;top:334px;width:5px;height:1px;background:#000"></div>
<div style="left:11px;top:332px;width:1px;height:5px;background:#000"></div>
<svg style="left:21.5px;top:326px" width="18" height="16" viewBox="0 0 18 16"><path d="M16.4 5.4 V12 q0 1.8-1.8 1.8 H3.2" stroke="#8c8878" stroke-width="1" fill="none" opacity=".55"/><path d="M1 2.9 q0-1.6 1.6-1.6 h3.2 q.9 0 1.4.8 l.8 1.3 h6.2 q1.6 0 1.6 1.6 v6.4 q0 1.6-1.6 1.6 H2.6 q-1.6 0-1.6-1.6z" fill="url(#fb)" stroke="#c08a1c" stroke-width="1.1"/><path d="M1.8 6.3 q0-1 1-1 h11.2 q1 0 1 1 v5 q0 1-1 1 H2.8 q-1 0-1-1z" fill="url(#fo)"/></svg>
<svg style="left:21.5px;top:345px" width="18" height="16" viewBox="0 0 18 16"><path d="M16.4 5.4 V12 q0 1.8-1.8 1.8 H3.2" stroke="#8c8878" stroke-width="1" fill="none" opacity=".55"/><path d="M1 2.9 q0-1.6 1.6-1.6 h3.2 q.9 0 1.4.8 l.8 1.3 h6.2 q1.6 0 1.6 1.6 v6.4 q0 1.6-1.6 1.6 H2.6 q-1.6 0-1.6-1.6z" fill="url(#fb)" stroke="#c08a1c" stroke-width="1.1"/><path d="M1.8 6.3 q0-1 1-1 h11.2 q1 0 1 1 v5 q0 1-1 1 H2.8 q-1 0-1-1z" fill="url(#fo)"/></svg>
<svg style="left:21.5px;top:364px" width="18" height="16" viewBox="0 0 18 16"><path d="M16.4 5.4 V12 q0 1.8-1.8 1.8 H3.2" stroke="#8c8878" stroke-width="1" fill="none" opacity=".55"/><path d="M1 2.9 q0-1.6 1.6-1.6 h3.2 q.9 0 1.4.8 l.8 1.3 h6.2 q1.6 0 1.6 1.6 v6.4 q0 1.6-1.6 1.6 H2.6 q-1.6 0-1.6-1.6z" fill="url(#fb)" stroke="#c08a1c" stroke-width="1.1"/><path d="M1.8 6.3 q0-1 1-1 h11.2 q1 0 1 1 v5 q0 1-1 1 H2.8 q-1 0-1-1z" fill="url(#fo)"/></svg>
<div style="left:7px;top:387px;width:9px;height:9px;box-sizing:border-box;border:1px solid #8498b0;border-radius:1px;background:linear-gradient(135deg,#fff 0,#fff 50%,#d8d4c4 100%)"></div>
<div style="left:9px;top:391px;width:5px;height:1px;background:#000"></div>
<div style="left:11px;top:389px;width:1px;height:5px;background:#000"></div>
<svg style="left:21.5px;top:383px" width="18" height="16" viewBox="0 0 18 16"><path d="M16.4 5.4 V12 q0 1.8-1.8 1.8 H3.2" stroke="#8c8878" stroke-width="1" fill="none" opacity=".55"/><path d="M1 2.9 q0-1.6 1.6-1.6 h3.2 q.9 0 1.4.8 l.8 1.3 h6.2 q1.6 0 1.6 1.6 v6.4 q0 1.6-1.6 1.6 H2.6 q-1.6 0-1.6-1.6z" fill="url(#fb)" stroke="#c08a1c" stroke-width="1.1"/><path d="M1.8 6.3 q0-1 1-1 h11.2 q1 0 1 1 v5 q0 1-1 1 H2.8 q-1 0-1-1z" fill="url(#fo)"/></svg>
<div style="left:7px;top:406px;width:9px;height:9px;box-sizing:border-box;border:1px solid #8498b0;border-radius:1px;background:linear-gradient(135deg,#fff 0,#fff 50%,#d8d4c4 100%)"></div>
<div style="left:9px;top:410px;width:5px;height:1px;background:#000"></div>
<div style="left:11px;top:408px;width:1px;height:5px;background:#000"></div>
<svg style="left:21.5px;top:402px" width="18" height="16" viewBox="0 0 18 16"><path d="M16.4 5.4 V12 q0 1.8-1.8 1.8 H3.2" stroke="#8c8878" stroke-width="1" fill="none" opacity=".55"/><path d="M1 2.9 q0-1.6 1.6-1.6 h3.2 q.9 0 1.4.8 l.8 1.3 h6.2 q1.6 0 1.6 1.6 v6.4 q0 1.6-1.6 1.6 H2.6 q-1.6 0-1.6-1.6z" fill="url(#fb)" stroke="#c08a1c" stroke-width="1.1"/><path d="M1.8 6.3 q0-1 1-1 h11.2 q1 0 1 1 v5 q0 1-1 1 H2.8 q-1 0-1-1z" fill="url(#fo)"/></svg>
<div style="left:7px;top:425px;width:9px;height:9px;box-sizing:border-box;border:1px solid #8498b0;border-radius:1px;background:linear-gradient(135deg,#fff 0,#fff 50%,#d8d4c4 100%)"></div>
<div style="left:9px;top:429px;width:5px;height:1px;background:#000"></div>
<div style="left:11px;top:427px;width:1px;height:5px;background:#000"></div>
<svg style="left:21.5px;top:421px" width="18" height="16" viewBox="0 0 18 16"><path d="M16.4 5.4 V12 q0 1.8-1.8 1.8 H3.2" stroke="#8c8878" stroke-width="1" fill="none" opacity=".55"/><path d="M1 2.9 q0-1.6 1.6-1.6 h3.2 q.9 0 1.4.8 l.8 1.3 h6.2 q1.6 0 1.6 1.6 v6.4 q0 1.6-1.6 1.6 H2.6 q-1.6 0-1.6-1.6z" fill="url(#fb)" stroke="#c08a1c" stroke-width="1.1"/><path d="M1.8 6.3 q0-1 1-1 h11.2 q1 0 1 1 v5 q0 1-1 1 H2.8 q-1 0-1-1z" fill="url(#fo)"/></svg>
<div style="left:7px;top:444px;width:9px;height:9px;box-sizing:border-box;border:1px solid #8498b0;border-radius:1px;background:linear-gradient(135deg,#fff 0,#fff 50%,#d8d4c4 100%)"></div>
<div style="left:9px;top:448px;width:5px;height:1px;background:#000"></div>
<div style="left:11px;top:446px;width:1px;height:5px;background:#000"></div>
<svg style="left:21.5px;top:440px" width="18" height="16" viewBox="0 0 18 16"><path d="M16.4 5.4 V12 q0 1.8-1.8 1.8 H3.2" stroke="#8c8878" stroke-width="1" fill="none" opacity=".55"/><path d="M1 2.9 q0-1.6 1.6-1.6 h3.2 q.9 0 1.4.8 l.8 1.3 h6.2 q1.6 0 1.6 1.6 v6.4 q0 1.6-1.6 1.6 H2.6 q-1.6 0-1.6-1.6z" fill="url(#fb)" stroke="#c08a1c" stroke-width="1.1"/><path d="M1.8 6.3 q0-1 1-1 h11.2 q1 0 1 1 v5 q0 1-1 1 H2.8 q-1 0-1-1z" fill="url(#fo)"/></svg>
</div>
<div style="left:368px;top:580px;width:208px;height:13px;overflow:hidden"><span class="t" style="left:43px;top:5.5px;font-size:13px;transform:scaleX(1.000)">www_backup_sysnet</span></div>
<div style="left:576px;top:145px;width:19px;height:448px;background:linear-gradient(to right,#f3f1ec 0,#fbfbf9 50%,#f3f1ec 100%)"></div>
<div style="left:577px;top:146px;width:17px;height:18px;box-sizing:border-box;border:1px solid #fff;border-radius:3px;box-shadow:inset 0 0 0 1px #b4c8f6,0 1px 0 #a4bcf0;background:linear-gradient(to right,#c9dafd 0,#bdd1fb 60%,#aec4f6 100%)"></div>
<svg style="left:581px;top:151.5px" width="9" height="7" viewBox="0 0 9 7"><path d="M1 5 L4.5 1.5 L8 5" stroke="#4d6185" stroke-width="2" fill="none"/></svg>
<div style="left:577px;top:574px;width:17px;height:18px;box-sizing:border-box;border:1px solid #fff;border-radius:3px;box-shadow:inset 0 0 0 1px #b4c8f6,0 1px 0 #a4bcf0;background:linear-gradient(to right,#c9dafd 0,#bdd1fb 60%,#aec4f6 100%)"></div>
<svg style="left:581px;top:580px" width="9" height="7" viewBox="0 0 9 7"><path d="M1 1.5 L4.5 5 L8 1.5" stroke="#4d6185" stroke-width="2" fill="none"/></svg>
<div style="left:577.5px;top:486px;width:16.5px;height:82px;box-sizing:border-box;border:1px solid #fff;border-radius:3px;box-shadow:inset 0 0 0 1px #b4c8f6,0 1px 0 #a4bcf0;background:linear-gradient(to right,#c9dafd 0,#bdd1fb 60%,#aec4f6 100%)"></div>
<div style="left:582px;top:523px;width:7px;height:1px;background:#8aa4e0"></div>
<div style="left:582px;top:525px;width:7px;height:1px;background:#8aa4e0"></div>
<div style="left:582px;top:527px;width:7px;height:1px;background:#8aa4e0"></div>
<div style="left:582px;top:529px;width:7px;height:1px;background:#8aa4e0"></div>
<div style="left:368px;top:592.5px;width:208px;height:18.5px;background:linear-gradient(to bottom,#f3f1ec 0,#fbfbf9 50%,#f3f1ec 100%)"></div>
<div style="left:368.5px;top:592.9px;width:17px;height:17.5px;box-sizing:border-box;border:1px solid #fff;border-radius:3px;box-shadow:inset 0 0 0 1px #b4c8f6,1px 0 0 #a4bcf0;background:linear-gradient(to bottom,#c9dafd 0,#bdd1fb 60%,#aec4f6 100%)"></div>
<svg style="left:373px;top:596.8px" width="7" height="9" viewBox="0 0 7 9"><path d="M5 1 L1.5 4.5 L5 8" stroke="#4d6185" stroke-width="2" fill="none"/></svg>
<div style="left:558px;top:592.9px;width:17px;height:17.5px;box-sizing:border-box;border:1px solid #fff;border-radius:3px;box-shadow:inset 0 0 0 1px #b4c8f6,1px 0 0 #a4bcf0;background:linear-gradient(to bottom,#c9dafd 0,#bdd1fb 60%,#aec4f6 100%)"></div>
<svg style="left:563.5px;top:596.8px" width="7" height="9" viewBox="0 0 7 9"><path d="M1.5 1 L5 4.5 L1.5 8" stroke="#4d6185" stroke-width="2" fill="none"/></svg>
<div style="left:387px;top:592.9px;width:137px;height:17.5px;box-sizing:border-box;border:1px solid #fff;border-radius:3px;box-shadow:inset 0 0 0 1px #b4c8f6,1px 0 0 #a4bcf0;background:linear-gradient(to bottom,#c9dafd 0,#bdd1fb 60%,#aec4f6 100%)"></div>
<div style="left:452px;top:598.5px;width:1px;height:7px;background:#8aa4e0"></div>
<div style="left:454px;top:598.5px;width:1px;height:7px;background:#8aa4e0"></div>
<div style="left:456px;top:598.5px;width:1px;height:7px;background:#8aa4e0"></div>
<div style="left:458px;top:598.5px;width:1px;height:7px;background:#8aa4e0"></div>
<div style="left:576px;top:592.5px;width:19px;height:18.5px;background:#ECE9D8"></div>
<div style="left:595px;top:117px;width:4px;height:494px;background:#ECE9D8"></div>
<div style="left:599px;top:117px;width:213px;height:22px;background:linear-gradient(to bottom,#f0eee2 0,#ece9d8 80%,#d8d2bd 100%)"></div>
<div style="left:599px;top:138px;width:213px;height:1px;background:#cbc7b8"></div>
<div style="left:599px;top:139px;width:213px;height:454px;background:#fff"></div>
<div style="left:599px;top:160px;width:213px;height:1px;background:linear-gradient(to right,#3f7fe8 0,#6c9ef0 55%,#b4cef8 90%,#d4e4fc 100%)"></div>
<svg style="left:603.5px;top:172px" width="15" height="16" viewBox="0 0 15 16"><circle cx="7.6" cy="8.6" r="6.6" fill="url(#gl)"/><path d="M3 8 C4 6 6.4 5.6 7.6 7 C8.8 7.4 9 9 8 10 C7.4 11.6 5.8 13 5 13.8 C3 12.6 2.2 10 3 8z M9.6 6.4 C11.4 5.8 12.8 7 13.4 8.4 C13 10 11.6 10.8 10.6 10.2 C9.6 9 9.2 7.6 9.6 6.4z" fill="url(#gr)"/><circle cx="4.2" cy="3.8" r="3" fill="#181818"/><path d="M2.6 3.8 L3.8 5 L5.8 2.6" stroke="#fff" stroke-width="1.1" fill="none"/></svg>
<svg style="left:622px;top:169.5px" width="50" height="22" viewBox="0 0 50 22"><g transform="translate(0,4.6)" stroke="#000" stroke-width="1.2" fill="none" stroke-linecap="butt"><path d="M2.6 1H5.9 M0 3.7H7.8 M9.9 0V12.7 M9.9 6.2H12.4"/><ellipse cx="3.9" cy="8.6" rx="3.1" ry="2.7"/></g><g transform="translate(14.8,4.6)" stroke="#000" stroke-width="1.2" fill="none" stroke-linecap="butt"><path d="M1 1.5V11.5 H8.4 M10.6 0V12.7 M10.6 6.2H12.9"/></g><g transform="translate(30,4.6)" stroke="#000" stroke-width="1.2" fill="none" stroke-linecap="butt"><path d="M2 1.3H10.5 V3.9 H2 V6.6 H10.9 M6.2 6.6V11.5 M0 11.5H12.3"/></g></svg>
<div style="left:599px;top:224px;width:213px;height:1px;background:linear-gradient(to right,#3f7fe8 0,#6c9ef0 55%,#b4cef8 90%,#d4e4fc 100%)"></div>
<div style="left:619px;top:237px;width:135.5px;height:17px;box-sizing:border-box;background:#316ac5;border:1px dotted #d6a25c"></div>
<svg style="left:603px;top:236.7px" width="16" height="15" viewBox="0 -0.5 16 15"><rect x=".1" y="9.8" width="15.7" height="3.1" fill="url(#bar)"/><rect x="6" y="2.7" width="2.6" height="7.6" fill="#dce6f2"/><rect x="8.4" y="2.7" width="1.1" height="7.6" fill="#505868"/><rect x="4.8" y="8.6" width="5.1" height="5.1" fill="url(#yb)" stroke="#8c6c08" stroke-width=".7"/><path d="M11.2 1.6 V.6 Q11.2 -.4 12.4 -.4 Q13.6 -.4 13.6 .6 V1.6" stroke="#8c8c84" stroke-width=".9" fill="none"/><rect x="10.3" y="1.4" width="4.3" height="3.8" rx=".7" fill="#eca844" stroke="#b87c20" stroke-width=".5"/></svg>
<svg style="left:603px;top:254.7px" width="16" height="15" viewBox="0 -0.5 16 15"><rect x=".1" y="9.8" width="15.7" height="3.1" fill="url(#bar)"/><rect x="6" y="2.7" width="2.6" height="7.6" fill="#dce6f2"/><rect x="8.4" y="2.7" width="1.1" height="7.6" fill="#505868"/><rect x="4.8" y="8.6" width="5.1" height="5.1" fill="url(#yb)" stroke="#8c6c08" stroke-width=".7"/><path d="M11.2 1.6 V.6 Q11.2 -.4 12.4 -.4 Q13.6 -.4 13.6 .6 V1.6" stroke="#8c8c84" stroke-width=".9" fill="none"/><rect x="10.3" y="1.4" width="4.3" height="3.8" rx=".7" fill="#eca844" stroke="#b87c20" stroke-width=".5"/></svg>
<div style="left:599px;top:306px;width:213px;height:1px;background:linear-gradient(to right,#3f7fe8 0,#6c9ef0 55%,#b4cef8 90%,#d4e4fc 100%)"></div>
<svg style="left:603.5px;top:323px" width="14" height="9" viewBox="0 0 14 9"><path d="M2.6 7.6 C0 7.6 0 4.4 2.8 4.4 C3 1.6 7 1 8 3.2 C10 2 12.6 3.4 11.6 5.2 C14 5.4 13.6 7.6 11.4 7.6z" fill="#d8d8d8" stroke="#a4a4a4" stroke-width=".7"/><path d="M3 5.6 C5 4.4 8 4.6 10.6 5.8" stroke="#f4f4f4" stroke-width=".8" fill="none"/></svg>
<div style="left:599px;top:592.5px;width:213px;height:18.5px;background:linear-gradient(to bottom,#f3f1ec 0,#fbfbf9 50%,#f3f1ec 100%)"></div>
<div style="left:599.5px;top:592.9px;width:17px;height:17.5px;box-sizing:border-box;border:1px solid #fff;border-radius:3px;box-shadow:inset 0 0 0 1px #b4c8f6,1px 0 0 #a4bcf0;background:linear-gradient(to bottom,#c9dafd 0,#bdd1fb 60%,#aec4f6 100%)"></div>
<svg style="left:604px;top:596.8px" width="7" height="9" viewBox="0 0 7 9"><path d="M5 1 L1.5 4.5 L5 8" stroke="#4d6185" stroke-width="2" fill="none"/></svg>
<div style="left:794px;top:592.9px;width:17px;height:17.5px;box-sizing:border-box;border:1px solid #fff;border-radius:3px;box-shadow:inset 0 0 0 1px #b4c8f6,1px 0 0 #a4bcf0;background:linear-gradient(to bottom,#c9dafd 0,#bdd1fb 60%,#aec4f6 100%)"></div>
<svg style="left:799.5px;top:596.8px" width="7" height="9" viewBox="0 0 7 9"><path d="M1.5 1 L5 4.5 L1.5 8" stroke="#4d6185" stroke-width="2" fill="none"/></svg>
<div style="left:618px;top:592.9px;width:33px;height:17.5px;box-sizing:border-box;border:1px solid #fff;border-radius:3px;box-shadow:inset 0 0 0 1px #b4c8f6,1px 0 0 #a4bcf0;background:linear-gradient(to bottom,#c9dafd 0,#bdd1fb 60%,#aec4f6 100%)"></div>
<div style="left:630px;top:598.5px;width:1px;height:7px;background:#8aa4e0"></div>
<div style="left:632px;top:598.5px;width:1px;height:7px;background:#8aa4e0"></div>
<div style="left:634px;top:598.5px;width:1px;height:7px;background:#8aa4e0"></div>
<div style="left:636px;top:598.5px;width:1px;height:7px;background:#8aa4e0"></div>
<div style="left:368px;top:611px;width:444px;height:22px;background:#ECE9D8"></div>
<div style="left:368px;top:610.5px;width:444px;height:1.5px;background:#d4cfbc"></div>
<div style="left:368px;top:612px;width:444px;height:1px;background:#f4f2e8"></div>
<div style="left:809px;top:630px;width:2px;height:2px;background:#fff"></div>
<div style="left:808px;top:629px;width:2px;height:2px;background:#b8b4a0"></div>
<div style="left:805px;top:630px;width:2px;height:2px;background:#fff"></div>
<div style="left:804px;top:629px;width:2px;height:2px;background:#b8b4a0"></div>
<div style="left:801px;top:630px;width:2px;height:2px;background:#fff"></div>
<div style="left:800px;top:629px;width:2px;height:2px;background:#b8b4a0"></div>
<div style="left:809px;top:626px;width:2px;height:2px;background:#fff"></div>
<div style="left:808px;top:625px;width:2px;height:2px;background:#b8b4a0"></div>
<div style="left:805px;top:626px;width:2px;height:2px;background:#fff"></div>
<div style="left:804px;top:625px;width:2px;height:2px;background:#b8b4a0"></div>
<div style="left:809px;top:622px;width:2px;height:2px;background:#fff"></div>
<div style="left:808px;top:621px;width:2px;height:2px;background:#b8b4a0"></div>
<span class="t" style="left:315.7px;top:5.9px;font-size:22px;font-weight:700;color:#f4f6fd;transform:scaleX(0.9217);">?</span>
<span class="t" style="left:25px;top:8.4px;font-size:19px;color:#d6dff5;transform:scaleX(1.0684);-webkit-text-stroke:0.5px #d6dff5;">Local Area Connection Prope...</span>
<span class="t" style="left:16.6px;top:46px;font-size:12px;color:#000;transform:scaleX(0.8641);">General</span>
<span class="t" style="left:66px;top:46px;font-size:12px;color:#000;transform:scaleX(0.8809);">Authentication</span>
<span class="t" style="left:146.5px;top:44px;font-size:12px;color:#000;transform:scaleX(0.8899);">Advanced</span>
<span class="t" style="left:33.4px;top:76.3px;font-size:12px;color:#0046d5;transform:scaleX(0.8714);">Internet Connection Firewall</span>
<span class="t" style="left:52.3px;top:100.4px;font-size:12px;color:#000;transform:scaleX(0.8747);"><u>P</u>rotect my computer and network by limiting or preventing</span>
<span class="t" style="left:52.3px;top:113px;font-size:12px;color:#000;transform:scaleX(0.8770);">access to this computer from the Internet</span>
<span class="t" style="left:36.4px;top:138.6px;font-size:12px;color:#000;transform:scaleX(0.8719);">Learn more about</span>
<span class="t" style="left:122px;top:138.6px;font-size:12px;color:#1a1a96;transform:scaleX(0.8767);text-decoration:underline;">Internet Connection Firewall</span>
<span class="t" style="left:253px;top:138.6px;font-size:12px;color:#000;transform:scaleX(0.7477);">.</span>
<span class="t" style="left:314.7px;top:189.9px;font-size:22px;font-weight:700;color:#f4f6fd;transform:scaleX(0.9217);">?</span>
<span class="t" style="left:6px;top:192.8px;font-size:19px;color:#d6dff5;transform:scaleX(1.0413);-webkit-text-stroke:0.5px #d6dff5;">Advanced Settings</span>
<span class="t" style="left:16.6px;top:228px;font-size:12px;color:#000;transform:scaleX(0.8628);">Services</span>
<span class="t" style="left:69.6px;top:230px;font-size:12px;color:#000;transform:scaleX(0.8681);">Security Logging</span>
<span class="t" style="left:160px;top:230px;font-size:12px;color:#000;transform:scaleX(0.8467);">ICMP</span>
<span class="t" style="left:23px;top:258.3px;font-size:12px;color:#000;transform:scaleX(0.8868);"><u>S</u>elect the services running on your network that Internet users can</span>
<span class="t" style="left:23px;top:270.8px;font-size:12px;color:#000;transform:scaleX(0.8848);">access.</span>
<span class="t" style="left:23px;top:291px;font-size:12px;color:#000;transform:scaleX(0.8693);">Services</span>
<span class="t" style="left:45.2px;top:327px;font-size:12px;color:#000;transform:scaleX(0.8802);">FTP Server</span>
<span class="t" style="left:45.2px;top:344px;font-size:12px;color:#000;transform:scaleX(0.8839);">Internet Mail Access Protocol Version 3 (IMAP3)</span>
<span class="t" style="left:45.2px;top:361px;font-size:12px;color:#000;transform:scaleX(0.8839);">Internet Mail Access Protocol Version 4 (IMAP4)</span>
<span class="t" style="left:45.2px;top:378px;font-size:12px;color:#000;transform:scaleX(0.8756);">Internet Mail Server (SMTP)</span>
<span class="t" style="left:45.2px;top:412px;font-size:12px;color:#000;transform:scaleX(0.8750);">Post-Office Protocol Version 3 (POP3)</span>
<span class="t" style="left:45.2px;top:429px;font-size:12px;color:#000;transform:scaleX(0.8817);">Remote Desktop</span>
<span class="t" style="left:45.2px;top:446px;font-size:12px;color:#fff;transform:scaleX(0.8946);">Secure Web Server (HTTPS)</span>
<span class="t" style="left:45.2px;top:463px;font-size:12px;color:#000;transform:scaleX(0.9024);">Telnet Server</span>
<span class="t" style="left:45.2px;top:480px;font-size:12px;color:#000;transform:scaleX(0.8961);">Web Server (HTTP)</span>
<span class="t" style="left:59.3px;top:571.5px;font-size:12px;color:#000;transform:scaleX(0.8506);">A<u>d</u>d...</span>
<span class="t" style="left:169px;top:571.5px;font-size:12px;color:#000;transform:scaleX(0.8794);">Edi<u>t</u>...</span>
<span class="t" style="left:277.5px;top:571.5px;font-size:12px;color:#aca899;transform:scaleX(0.8497);">D<u>e</u>lete</span>
<span class="t" style="left:230.7px;top:611px;font-size:12px;color:#000;transform:scaleX(0.8995);">OK</span>
<span class="t" style="left:302.4px;top:611px;font-size:12px;color:#000;transform:scaleX(0.8806);">Cancel</span>
<span class="t" style="left:391.6px;top:11.2px;font-size:19px;color:#0a2a8c;transform:scaleX(1.0687);-webkit-text-stroke:0.5px #0a2a8c;">Network Connections</span>
<span class="t" style="left:390.6px;top:10.3px;font-size:19px;color:#fff;transform:scaleX(1.0687);-webkit-text-stroke:0.5px #fff;">Network Connections</span>
<span class="t" style="left:388px;top:40.5px;font-size:13px;color:#000;transform:scaleX(0.9061);"><u>F</u>ile</span>
<span class="t" style="left:423.8px;top:40.5px;font-size:13px;color:#000;transform:scaleX(0.9462);"><u>E</u>dit</span>
<span class="t" style="left:461.3px;top:40.5px;font-size:13px;color:#000;transform:scaleX(0.9909);"><u>V</u>iew</span>
<span class="t" style="left:505.2px;top:40.5px;font-size:13px;color:#000;transform:scaleX(0.9722);">F<u>a</u>vorites</span>
<span class="t" style="left:572.8px;top:40.5px;font-size:13px;color:#000;transform:scaleX(1.0343);"><u>T</u>ools</span>
<span class="t" style="left:620px;top:40.5px;font-size:13px;color:#000;transform:scaleX(0.9439);">Advan<u>c</u>ed</span>
<span class="t" style="left:691px;top:40.5px;font-size:13px;color:#000;transform:scaleX(0.9159);"><u>H</u>elp</span>
<span class="t" style="left:407.2px;top:68px;font-size:13px;color:#000;transform:scaleX(0.9064);">Back</span>
<span class="t" style="left:553.2px;top:68px;font-size:13px;color:#000;transform:scaleX(0.9514);">Search</span>
<span class="t" style="left:625px;top:68px;font-size:13px;color:#000;transform:scaleX(0.9802);">Folders</span>
<span class="t" style="left:380px;top:96.2px;font-size:13px;color:#8a8778;transform:scaleX(0.9643);">A<u>d</u>dress</span>
<span class="t" style="left:453.5px;top:97.8px;font-size:13px;color:#000;transform:scaleX(0.9712);">Network Connections</span>
<span class="t" style="left:784px;top:98px;font-size:13px;color:#000;transform:scaleX(0.8476);">Go</span>
<span class="t" style="left:374.3px;top:126px;font-size:13px;color:#000;transform:scaleX(0.9686);">Folders</span>
<span class="t" style="left:430.5px;top:148.5px;font-size:13px;color:#000;transform:scaleX(0.9874);">Append (E:)</span>
<span class="t" style="left:430.5px;top:167.5px;font-size:13px;color:#000;transform:scaleX(0.9602);">CD Drive (F:)</span>
<span class="t" style="left:430.5px;top:186.5px;font-size:13px;color:#000;transform:scaleX(0.9464);">CD Drive (G:)</span>
<span class="t" style="left:430.5px;top:205.5px;font-size:13px;color:#000;transform:scaleX(0.9583);">Control Panel</span>
<span class="t" style="left:449.5px;top:224.5px;font-size:13px;color:#000;">Administrative Tools</span>
<span class="t" style="left:449.5px;top:243.5px;font-size:13px;color:#000;transform:scaleX(0.9380);">Fonts</span>
<span class="t" style="left:449.5px;top:262.5px;font-size:13px;color:#000;transform:scaleX(0.9671);">Network Connections</span>
<span class="t" style="left:449.5px;top:281.5px;font-size:13px;color:#000;transform:scaleX(0.9669);">Printers and Faxes</span>
<span class="t" style="left:449.5px;top:300.5px;font-size:13px;color:#000;transform:scaleX(0.9725);">Scanners and Camera</span>
<span class="t" style="left:449.5px;top:319.5px;font-size:13px;color:#000;transform:scaleX(0.9842);">Scheduled Tasks</span>
<span class="t" style="left:411px;top:338.5px;font-size:13px;color:#000;transform:scaleX(0.9618);">My Network Places</span>
<span class="t" style="left:411px;top:357.5px;font-size:13px;color:#000;transform:scaleX(0.9251);">Recycle Bin</span>
<span class="t" style="left:411px;top:395.5px;font-size:13px;color:#000;transform:scaleX(0.9599);">ebook</span>
<span class="t" style="left:411px;top:414.5px;font-size:13px;color:#000;transform:scaleX(0.9446);">hdd</span>
<span class="t" style="left:411px;top:433.5px;font-size:13px;color:#000;transform:scaleX(0.9784);">img</span>
<span class="t" style="left:411px;top:452.5px;font-size:13px;color:#000;transform:scaleX(0.9713);">incops</span>
<span class="t" style="left:411px;top:471.5px;font-size:13px;color:#000;transform:scaleX(0.9777);">msdn_topic</span>
<span class="t" style="left:411px;top:490.5px;font-size:13px;color:#000;">problem</span>
<span class="t" style="left:411px;top:509.5px;font-size:13px;color:#000;transform:scaleX(0.9713);">rev_theatre_0x10383910_10:</span>
<span class="t" style="left:411px;top:528.5px;font-size:13px;color:#000;transform:scaleX(0.9518);">sedona</span>
<span class="t" style="left:411px;top:547.5px;font-size:13px;color:#000;transform:scaleX(0.9954);">www_backup_dotnetinfo</span>
<span class="t" style="left:411px;top:566.5px;font-size:13px;color:#000;transform:scaleX(0.9929);">www_backup_support</span>
<span class="t" style="left:607.6px;top:122.8px;font-size:13px;color:#000;transform:scaleX(0.9283);">Name</span>
<span class="t" style="left:613.4px;top:143.9px;font-size:13px;font-weight:700;color:#000;transform:scaleX(1.0084);">Broadband</span>
<span class="t" style="left:613.4px;top:207.7px;font-size:13px;font-weight:700;color:#000;transform:scaleX(1.0560);">LAN or High-Speed Internet</span>
<span class="t" style="left:620.5px;top:239px;font-size:13px;color:#fff;transform:scaleX(0.9686);">Local Area Connection</span>
<span class="t" style="left:621.5px;top:257px;font-size:13px;color:#000;transform:scaleX(0.9572);">1394 Connection</span>
<span class="t" style="left:613.4px;top:290.4px;font-size:13px;font-weight:700;color:#000;transform:scaleX(1.0683);">Virtual Private Network</span>
<span class="t" style="left:621.5px;top:320.8px;font-size:13px;color:#000;transform:scaleX(0.9880);">dotnetxpert.com</span>
<span class="t" style="left:370.5px;top:616.6px;font-size:13px;color:#000;transform:scaleX(0.9696);">Intel(R) PRO/100 VE Network Connection</span>
<svg style="left:624.4px;top:246.8px" width="13" height="22" viewBox="0 0 13 22"><path d="M.6 .8 V16.8 L4.2 13.3 L7 20 L9.6 18.9 L6.8 12.3 H11.8z" fill="#fff" fill-opacity=".15" stroke="#000" stroke-width="1.2" stroke-linejoin="miter"/></svg>
</div></body></html>
